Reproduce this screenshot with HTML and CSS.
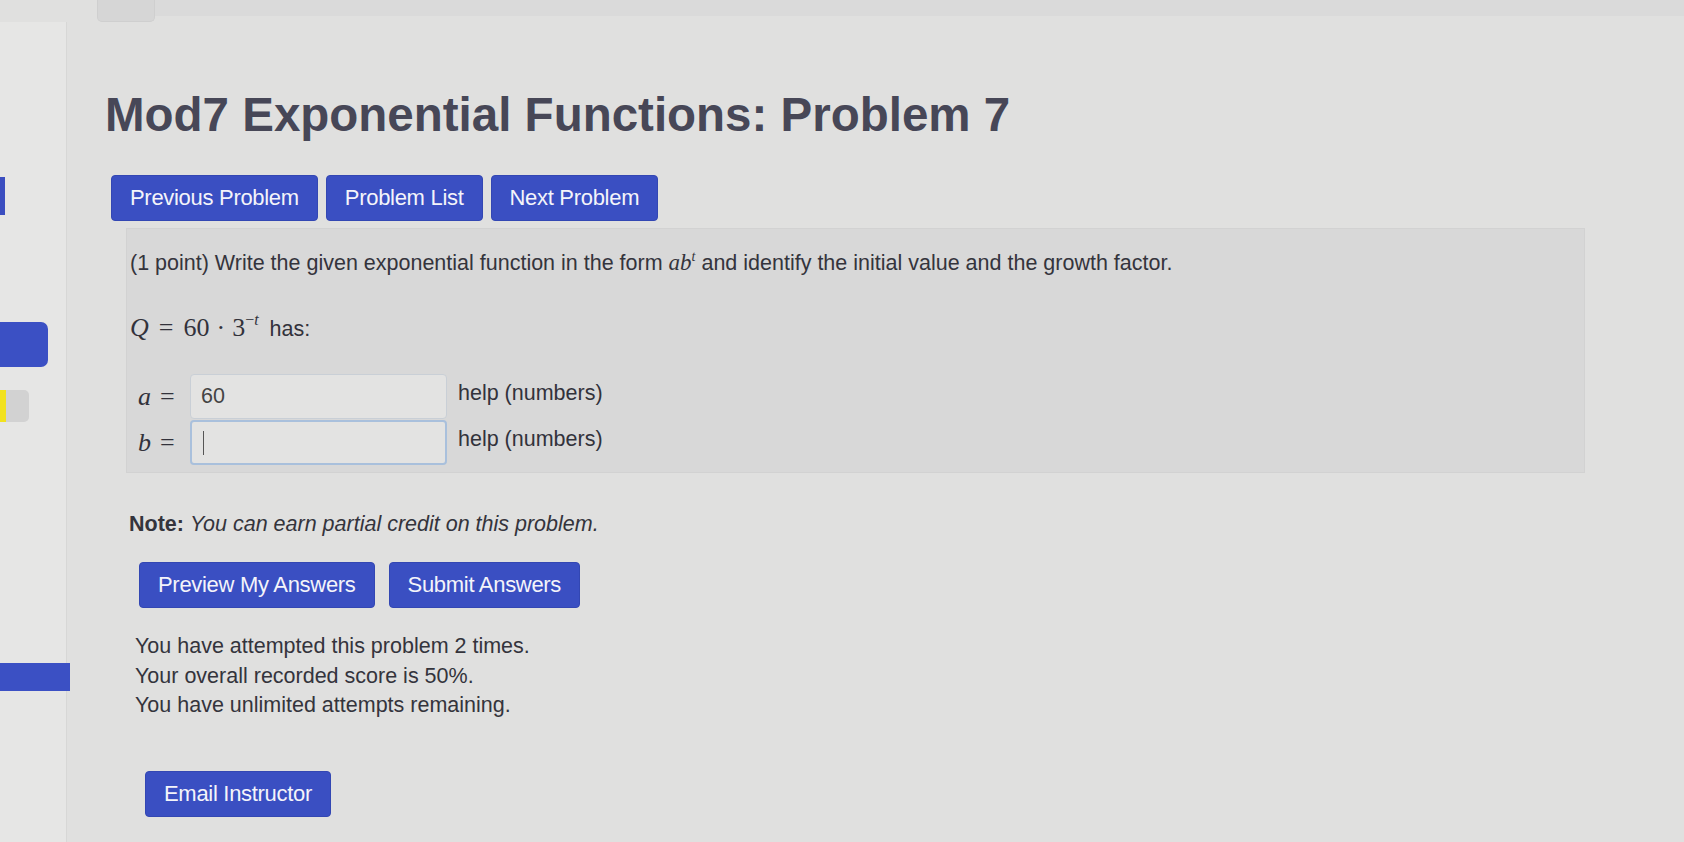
FILE: index.html
```html
<!DOCTYPE html>
<html>
<head>
<meta charset="utf-8">
<link rel="stylesheet" href="styles.css">
</head>
<body>
<div class="topbar">
  <div class="toptab"></div>
  <div class="topstrip"></div>
</div>
<div class="layout">
  <aside class="sidebar">
    <div class="sb-mark"></div>
    <div class="sb-block"></div>
    <div class="sb-flag"><span class="sb-yellow"></span><span class="sb-grey"></span></div>
    <div class="sb-bar"></div>
  </aside>
  <main class="main">
    <h1 class="title">Mod7 Exponential Functions: Problem 7</h1>
    <nav class="navrow">
      <a class="btn">Previous Problem</a>
      <a class="btn">Problem List</a>
      <a class="btn">Next Problem</a>
    </nav>
    <section class="problem">
      <p class="statement">(1 point) Write the given exponential function in the form <span class="ms">ab<sup>t</sup></span> and identify the initial value and the growth factor.</p>
      <p class="eq"><span class="m">Q</span><span class="mr op">=</span><span class="mr">60</span><span class="mr dot">·</span><span class="mr">3<sup>−<i>t</i></sup></span><span class="has">has:</span></p>
      <div class="answers">
        <div class="ans-row">
          <span class="m var">a</span><span class="mr eqs">=</span>
          <div class="field">60</div>
          <span class="help">help (numbers)</span>
        </div>
        <div class="ans-row">
          <span class="m var">b</span><span class="mr eqs">=</span>
          <div class="field focus"><span class="caret"></span></div>
          <span class="help">help (numbers)</span>
        </div>
      </div>
    </section>
    <p class="note"><b>Note:</b> <i>You can earn partial credit on this problem.</i></p>
    <div class="actions">
      <a class="btn">Preview My Answers</a>
      <a class="btn">Submit Answers</a>
    </div>
    <div class="attempts">
      <div>You have attempted this problem 2 times.</div>
      <div>Your overall recorded score is 50%.</div>
      <div>You have unlimited attempts remaining.</div>
    </div>
    <a class="btn btn-email">Email Instructor</a>
  </main>
</div>
</body>
</html>
```
FILE: styles.css
```css
html, body {
  margin: 0;
  padding: 0;
}
body {
  width: 1684px;
  height: 842px;
  overflow: hidden;
  background: #e0e0df;
  font-family: "Liberation Sans", Arial, sans-serif;
  color: #32323b;
}
.topbar {
  height: 22px;
  display: flex;
  align-items: flex-start;
}
.toptab {
  margin-left: 97px;
  width: 56px;
  height: 21px;
  background: #d6d6d6;
  border: 1px solid #cfcfcf;
  border-top: none;
  border-radius: 0 0 5px 5px;
}
.topstrip {
  flex: 1;
  height: 16px;
  background: #dadada;
}
.layout {
  display: flex;
}
.sidebar {
  width: 66px;
  height: 820px;
  background: #e6e6e5;
  border-right: 1px solid #d7d7d6;
  display: flex;
  flex-direction: column;
}
.sb-mark {
  margin-top: 155px;
  width: 5px;
  height: 38px;
  background: #3b4ec0;
}
.sb-block {
  margin-top: 107px;
  width: 48px;
  height: 45px;
  background: #3b50c4;
  border-radius: 0 7px 7px 0;
}
.sb-flag {
  margin-top: 23px;
  display: flex;
  height: 32px;
}
.sb-yellow {
  width: 6px;
  background: #f2e21e;
}
.sb-grey {
  width: 23px;
  background: #d2d2d2;
  border-radius: 0 5px 5px 0;
}
.sb-bar {
  margin-top: 241px;
  width: 70px;
  height: 28px;
  background: #3b50c4;
}
.main {
  flex: 1;
  padding-left: 38px;
}
.title {
  margin: 63px 0 0 0;
  font-size: 47.5px;
  font-weight: bold;
  color: #474757;
  line-height: 60px;
}
.navrow {
  margin-top: 30px;
  margin-left: 6px;
  display: flex;
  gap: 8px;
}
.btn {
  display: inline-block;
  box-sizing: border-box;
  height: 46px;
  line-height: 44px;
  padding: 0 18px;
  background: #3a4fc2;
  color: #f4f4fa;
  font-size: 22px;
  letter-spacing: -0.3px;
  border: 1px solid #3347b3;
  border-radius: 4px;
  text-decoration: none;
}
.problem {
  margin-top: 7px;
  margin-left: 21px;
  width: 1459px;
  height: 245px;
  box-sizing: border-box;
  background: #d8d8d8;
  border: 1px solid #d2d2d2;
  padding: 20px 8px 0 3px;
}
.statement {
  margin: 0;
  font-size: 21.5px;
  color: #34343c;
  line-height: 28px;
}
.ms {
  font-family: "Liberation Serif", "Times New Roman", serif;
  font-style: italic;
  font-size: 23px;
}
.ms sup {
  font-size: 14px;
  vertical-align: 9px;
}
.m {
  font-family: "Liberation Serif", "Times New Roman", serif;
  font-style: italic;
  font-size: 26px;
}
.mr {
  font-family: "Liberation Serif", "Times New Roman", serif;
  font-size: 26px;
}
sup {
  font-size: 16px;
  vertical-align: 11px;
  line-height: 0;
}
.eq {
  margin: 36px 0 0 0;
  font-size: 21.5px;
  line-height: 30px;
}
.op {
  margin: 0 10px;
}
.dot {
  margin: 0 7px;
}
.has {
  margin-left: 11px;
}
.answers {
  margin-top: 30px;
  display: flex;
  flex-direction: column;
  gap: 1px;
}
.ans-row {
  display: flex;
  align-items: center;
  padding-left: 8px;
  height: 45px;
}
.var {
  width: 22px;
}
.eqs {
  width: 30px;
}
.field {
  box-sizing: border-box;
  width: 257px;
  height: 45px;
  background: #e3e3e2;
  border: 1px solid #c9cfd6;
  border-radius: 4px;
  font-size: 21.5px;
  line-height: 43px;
  padding-left: 10px;
  color: #444;
}
.field.focus {
  border: 2px solid #a9c0dc;
  display: flex;
  align-items: center;
}
.caret {
  width: 1px;
  height: 24px;
  background: #555;
  margin-left: 1px;
}
.help {
  margin-left: 11px;
  font-size: 21.5px;
  margin-top: -6px;
}
.note {
  margin: 38px 0 0 24px;
  font-size: 21.5px;
  line-height: 26px;
  color: #34343c;
}
.actions {
  margin: 25px 0 0 34px;
  display: flex;
  gap: 14px;
  align-items: flex-start;
}
.attempts {
  margin: 24px 0 0 30px;
  font-size: 21.5px;
  line-height: 29.5px;
  color: #34343c;
}
.btn-email {
  margin: 50px 0 0 40px;
}
```
